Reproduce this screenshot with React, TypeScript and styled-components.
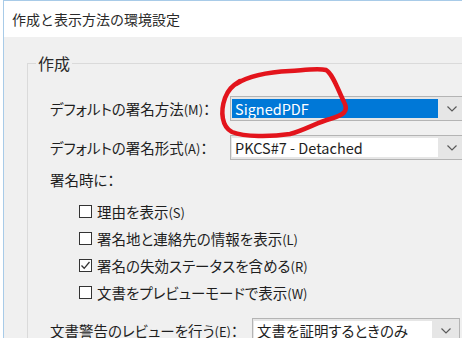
import styled, { createGlobalStyle } from "styled-components";

const GlobalStyle = createGlobalStyle`
  html, body {
    margin: 0;
    padding: 0;
    overflow: hidden;
    background: #ffffff;
  }
  body {
    font-family: "Noto Sans CJK JP", "Noto Sans", sans-serif;
    color: #1e1e1e;
  }
`;

function Chevron() {
  return (
    <svg width="10" height="6" viewBox="0 0 10 6">
      <polyline points="0.5,0.5 5,5 9.5,0.5" fill="none" stroke="#5a5a5a" strokeWidth="1.2" />
    </svg>
  );
}

function Check() {
  return (
    <svg width="11" height="11" viewBox="0 0 11 11">
      <polyline points="1.5,5.5 4.2,8.3 9.5,2" fill="none" stroke="#333" strokeWidth="1.3" />
    </svg>
  );
}

type ComboProps = { value: string; width: number; selected?: boolean };

function Combo({ value, width, selected }: ComboProps) {
  return (
    <Select $width={width}>
      <Field $selected={selected}>{value}</Field>
      <Arrow>
        <Chevron />
      </Arrow>
    </Select>
  );
}

function Option({ label, mnemonic, checked }: { label: string; mnemonic: string; checked?: boolean }) {
  return (
    <CheckRow>
      <Box>{checked && <Check />}</Box>
      <span>
        {label}
        <Key>({mnemonic})</Key>
      </span>
    </CheckRow>
  );
}

export default function App() {
  return (
    <>
      <GlobalStyle />
      <Window>
        <TitleBar>作成と表示方法の環境設定</TitleBar>
        <Body>
          <Group>
            <Legend>作成</Legend>
            <SelectRow>
              <RowLabel $width={180}>
                デフォルトの署名方法<Key>(M)</Key>：
              </RowLabel>
              <Combo value="SignedPDF" width={236} selected />
            </SelectRow>
            <SelectRow $top={14}>
              <RowLabel $width={180}>
                デフォルトの署名形式<Key>(A)</Key>：
              </RowLabel>
              <Combo value="PKCS#7 - Detached" width={236} />
            </SelectRow>
            <SectionLabel>署名時に：</SectionLabel>
            <Options>
              <Option label="理由を表示" mnemonic="S" />
              <Option label="署名地と連絡先の情報を表示" mnemonic="L" />
              <Option label="署名の失効ステータスを含める" mnemonic="R" checked />
              <Option label="文書をプレビューモードで表示" mnemonic="W" />
            </Options>
            <SelectRow $top={12}>
              <RowLabel $width={202}>
                文書警告のレビューを行う<Key>(E)</Key>：
              </RowLabel>
              <Combo value="文書を証明するときのみ" width={208} />
            </SelectRow>
          </Group>
        </Body>
      </Window>
      <Annotation width="462" height="338" viewBox="0 0 462 338">
        <path
          d="M 236 84 C 250 75, 268 72, 290 71 C 305 70, 318 68, 326 70 C 333 74, 338 90, 344 102 C 349 111, 344 115, 330 119 C 318 122, 305 130, 290 134 C 270 137, 245 137, 232 132 C 222 127, 220 112, 225 98 C 228 90, 232 86, 240 81"
          fill="none"
          stroke="#e3141c"
          strokeWidth="4.5"
          strokeLinecap="round"
          strokeLinejoin="round"
        />
      </Annotation>
    </>
  );
}

// --- Styles ---

const Window = styled.div`
  margin-left: 3px;
  height: 338px;
  box-sizing: border-box;
  border-top: 1px solid #a8cbe8;
  border-left: 1px solid #a8cbe8;
  display: flex;
  flex-direction: column;
  overflow: hidden;
`;

const TitleBar = styled.div`
  height: 36px;
  flex-shrink: 0;
  display: flex;
  align-items: center;
  padding-left: 8px;
  background: #ffffff;
  font-size: 14px;
  color: #2a2a2a;
`;

const Body = styled.div`
  flex: 1;
  background: #f0f0f0;
  padding: 16px 0 0 23px;
`;

const Group = styled.fieldset`
  margin: 0;
  min-width: 0;
  padding: 23px 0 0 22px;
  border: 1px solid #dadada;
  border-right: none;
  border-bottom: none;
  display: flex;
  flex-direction: column;
  font-size: 14.5px;
  font-feature-settings: "palt";
`;

const Legend = styled.legend`
  margin-left: -14px;
  padding: 0 2px;
  font-size: 16px;
  line-height: 20px;
  color: #2a2a2a;
`;

const SelectRow = styled.div<{ $top?: number }>`
  display: flex;
  align-items: center;
  height: 25px;
  margin-top: ${(p) => p.$top ?? 0}px;
`;

const RowLabel = styled.div<{ $width: number }>`
  width: ${(p) => p.$width}px;
  flex-shrink: 0;
  white-space: nowrap;
`;

const Key = styled.span`
  font-size: 13px;
`;

const Select = styled.div<{ $width: number }>`
  width: ${(p) => p.$width}px;
  height: 25px;
  flex-shrink: 0;
  box-sizing: border-box;
  border: 1px solid #b4b4b4;
  background: #e6e6e6;
  display: flex;
`;

const Field = styled.div<{ $selected?: boolean }>`
  flex: 1;
  margin: 2px 0 2px 1px;
  padding-left: 3px;
  display: flex;
  align-items: center;
  background: ${(p) => (p.$selected ? "#0078d7" : "#ffffff")};
  color: ${(p) => (p.$selected ? "#ffffff" : "#1e1e1e")};
  font-size: 14.5px;
  white-space: nowrap;
  overflow: hidden;
`;

const Arrow = styled.div`
  width: 27px;
  flex-shrink: 0;
  display: flex;
  align-items: center;
  justify-content: center;
`;

const SectionLabel = styled.div`
  margin-top: 10px;
  line-height: 20px;
`;

const Options = styled.div`
  margin-top: 8px;
  display: flex;
  flex-direction: column;
`;

const CheckRow = styled.div`
  height: 27px;
  padding-left: 29px;
  display: flex;
  align-items: center;
  gap: 5px;
  white-space: nowrap;
`;

const Box = styled.div`
  width: 13px;
  height: 13px;
  box-sizing: border-box;
  border: 1px solid #333333;
  background: #ffffff;
  display: flex;
  align-items: center;
  justify-content: center;
`;

const Annotation = styled.svg`
  position: absolute;
  top: 0;
  left: 0;
  pointer-events: none;
`;
